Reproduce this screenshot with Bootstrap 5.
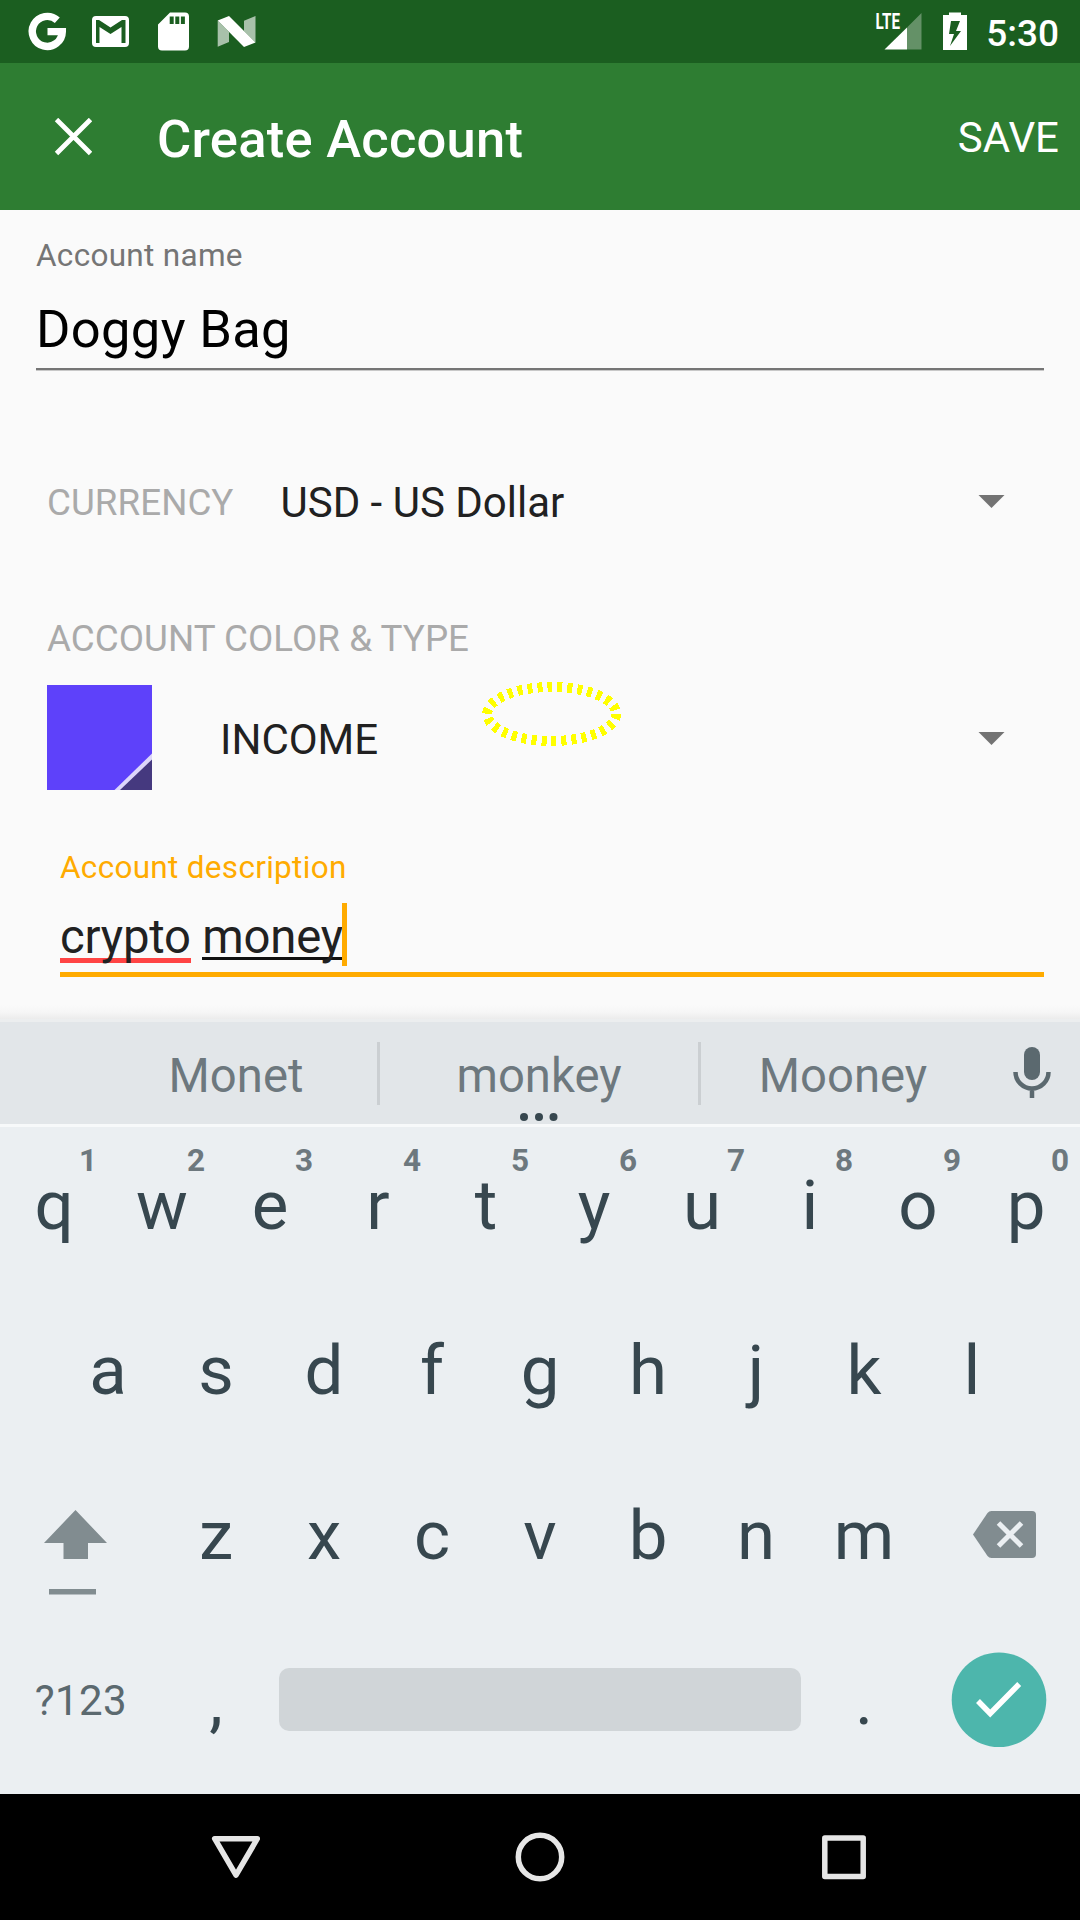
<!DOCTYPE html>
<html lang="en">
<head>
<meta charset="utf-8">
<meta name="viewport" content="width=device-width, initial-scale=1">
<title>Create Account</title>
<link href="https://cdn.jsdelivr.net/npm/bootstrap@5.3.0/dist/css/bootstrap.min.css" rel="stylesheet">
<style>
body{font-family:Roboto,"Noto Sans",sans-serif;background:#fafafa;color:#212121;overflow:hidden}
.phone{width:1080px;height:1920px;background:#fafafa}
svg{display:block;flex:none}
.statusbar{height:63px;background:#1b5e20}
.clock{font-size:37px;font-weight:500;line-height:44px;margin:0 21px 0 16px;padding-top:4px}
.toolbar{height:147px;background:#2e7d32;padding:0 21px 0 54px}
.toolbar h1{font-size:52.5px;font-weight:500;line-height:64px;margin:5px 0 0 65px;letter-spacing:.25px}
.save-btn{font-size:42px;line-height:50px;color:#fff;border:0;border-radius:0;margin-top:3px}
.form-area{height:809px;padding:26px 36px 0}
.float-label{font-size:31.5px;line-height:40px;color:#757575;letter-spacing:.3px}
.name-value{font-size:52.5px;line-height:64px;margin-top:21px;padding-bottom:7px;border-bottom:2px solid #757575;box-shadow:0 1px #c8c8c8;color:#000;letter-spacing:.32px}
.section-label{font-size:36.75px;color:#aaa;line-height:44px;letter-spacing:.04px}
.type-heading{margin:84px 0 0 11px}
.pick-value{font-size:42px;line-height:50px}
.drop{margin-left:auto}
.currency-row{height:61px;margin-top:102px;padding:0 39px 0 11px}
.currency-row .pick-value{margin-left:47px}
.currency-row .drop{margin-bottom:3px}
.type-row{height:105px;margin-top:24px;padding:0 39px 0 11px}
.type-row .pick-value{margin-left:68px;padding-top:4px}
.type-row .drop{margin-top:1px}
.desc-block{margin:58px 0 0 24px}
.desc-block .float-label{color:#ffab00}
.desc-value{font-size:47.25px;line-height:60px;height:70px;margin-top:19px;border-bottom:5px solid #ffab00;letter-spacing:-.2px}
.spell-bad,.spell-active{display:inline-block;height:60px}
.spell-bad{background:linear-gradient(#f44,#f44) 0 51px/100% 5px no-repeat}
.spell-active{background:linear-gradient(#111,#111) 0 50px/100% 3px no-repeat}
.caret-bar{width:5px;height:63px;background:#ffab00;margin:-4px 0 0 -1px}
.marker{left:480px;top:680px}
.kb-shadow{height:19px;margin-top:-19px;background:linear-gradient(#fafafa 25%,#f6f6f6 65%,#ececec)}
.suggest{height:108px;background:#e2e6e9;border-top:3px solid #eceeef;border-bottom:3px solid #f7f9fa;color:#6d787e;font-size:47.25px;padding-left:95px}
.suggest .word{line-height:102px;padding-top:3px}
.suggest .sep{width:3px;height:63px;background:#cbcfd2;margin-top:20px}
.more-dots{left:519px;top:1112px}
.mic{width:95px;padding:24px 0 0 28px}
.keys{height:667px;background:#ebeff2;color:#37474f}
.keyrow{height:165px}
.keycap{width:108px;font-size:69px;line-height:158px}
.hint{right:10px;top:16px;width:20px;font-size:31.5px;font-weight:700;line-height:36px;color:#6d787e}
.symbols{width:162px;font-size:42px;line-height:158px;letter-spacing:.4px;color:#5b696f}
.space{width:522px;height:63px;margin:46px 9px 0 9px;border-radius:10px;background:#d0d5d8}
.navbar-android{height:126px;background:#000}
</style>
</head>
<body>
<main class="phone d-flex flex-column position-relative overflow-hidden">
  <header class="text-white">
    <div class="statusbar d-flex align-items-center">
      <svg width="270" height="63" fill="#fff">
        <path d="M57.300 20.200A15 15 0 1 0 62.300 31.600H47.500" fill="none" stroke="#fff" stroke-width="7.400"/>
        <path fill-rule="evenodd" d="M96 16h29a4 4 0 0 1 4 4v23a4 4 0 0 1-4 4H96a4 4 0 0 1-4-4V20a4 4 0 0 1 4-4zM96 20v23h3.500V27l11 7 11-7v16h4V20h-3.500l-11.500 7.500L99 20z"/>
        <path fill-rule="evenodd" d="M170 12.500h15a4 4 0 0 1 4 4v30a4 4 0 0 1-4 4h-23a4 4 0 0 1-4-4V24.500zM169.700 16.500v7.500h4v-7.500zM175.300 16.500v7.500h4v-7.500zM180.900 16.500v7.500h4v-7.500z"/>
        <path d="M217.700 20.500L229 32v10l-11.300 4.700zM244 20.700l11.500-4.700v26.500L244 31z" opacity=".62"/>
        <path d="M217.700 20.500l11.300-4.500 26.500 26.500-11.500 4.500z"/>
      </svg>
      <svg class="ms-auto" width="100" height="63" viewBox="870 0 100 63" fill="#fff">
        <text x="875.500" y="29" font-size="22" font-weight="700" font-family="Roboto" textLength="24.500" lengthAdjust="spacingAndGlyphs">LTE</text>
        <path d="M907 27.500L921.500 13v36.500H907z" opacity=".32"/><path d="M884.500 49.500L907 27.500v22z"/>
        <path fill-rule="evenodd" d="M949 12.500h12V15h6v35h-24V15h6zM951 21l-2 13h5l-4 12 11-15h-5l4-10z"/>
      </svg>
      <span class="clock">5:30</span>
    </div>
    <div class="toolbar d-flex align-items-center">
      <svg width="38" height="38" stroke="#fff" stroke-width="4.800"><path d="M2.500 1.500l34 34M36.500 1.500l-34 34"/></svg>
      <h1>Create Account</h1>
      <button class="btn save-btn ms-auto p-0">SAVE</button>
    </div>
  </header>

  <section class="form-area">
    <div class="float-label">Account name</div>
    <div class="name-value">Doggy Bag</div>
    <div class="currency-row d-flex align-items-center">
      <span class="section-label">CURRENCY</span>
      <span class="pick-value">USD - US Dollar</span>
      <svg class="drop" width="27" height="13" fill="#737373"><path d="M.5 0h26L13.500 13z"/></svg>
    </div>
    <div class="section-label type-heading">ACCOUNT COLOR &amp; TYPE</div>
    <div class="type-row d-flex align-items-center">
      <svg width="105" height="105"><path fill="#5e41fa" d="M0 0h105v105H0z"/><path fill="#dcd6fa" d="M105 68.500V105H67.500z"/><path fill="#45397f" d="M105 74.500V105H73z"/></svg>
      <span class="pick-value">INCOME</span>
      <svg class="drop" width="27" height="13" fill="#737373"><path d="M.5 0h26L13.500 13z"/></svg>
    </div>
    <div class="desc-block">
      <div class="float-label">Account description</div>
      <div class="desc-value d-flex"><span class="spell-bad">crypto</span><span>&nbsp;</span><span class="spell-active">money</span><span class="caret-bar"></span></div>
    </div>
  </section>
  <svg class="marker position-absolute" width="144" height="68" shape-rendering="crispEdges"><ellipse cx="71.700" cy="34" rx="64.500" ry="27" fill="none" stroke="#ff0" stroke-width="10" stroke-dasharray="5 5"/></svg>

  <div class="kb-shadow"></div>
  <section class="suggest d-flex">
    <div class="word flex-fill text-center" style="width:282px">Monet</div><div class="sep"></div>
    <div class="word flex-fill text-center" style="width:318px">monkey</div><div class="sep"></div>
    <div class="word flex-fill text-center" style="width:284px">Mooney</div>
    <div class="mic flex-shrink-0"><svg width="40" height="54" fill="#5b696f"><rect x="11" y="1" width="16" height="33" rx="8"/><path d="M2.500 26a16.500 16.500 0 0 0 33 0M19 42v10" fill="none" stroke="#5b696f" stroke-width="4.500"/></svg></div>
  </section>
  <svg class="more-dots position-absolute" width="42" height="10" fill="#37474f"><circle cx="5" cy="5" r="4"/><circle cx="20" cy="5" r="4"/><circle cx="34.500" cy="5" r="4"/></svg>

  <section class="keys text-center">
    <div class="keyrow d-flex">
      <div class="keycap position-relative">q<span class="hint position-absolute">1</span></div>
      <div class="keycap position-relative">w<span class="hint position-absolute">2</span></div>
      <div class="keycap position-relative">e<span class="hint position-absolute">3</span></div>
      <div class="keycap position-relative">r<span class="hint position-absolute">4</span></div>
      <div class="keycap position-relative">t<span class="hint position-absolute">5</span></div>
      <div class="keycap position-relative">y<span class="hint position-absolute">6</span></div>
      <div class="keycap position-relative">u<span class="hint position-absolute">7</span></div>
      <div class="keycap position-relative">i<span class="hint position-absolute">8</span></div>
      <div class="keycap position-relative">o<span class="hint position-absolute">9</span></div>
      <div class="keycap position-relative">p<span class="hint position-absolute">0</span></div>
    </div>
    <div class="keyrow d-flex justify-content-center">
      <div class="keycap">a</div><div class="keycap">s</div><div class="keycap">d</div><div class="keycap">f</div><div class="keycap">g</div><div class="keycap">h</div><div class="keycap">j</div><div class="keycap">k</div><div class="keycap">l</div>
    </div>
    <div class="keyrow d-flex">
      <svg width="162" height="165" viewBox="0 1457 162 165" fill="#818c90"><path d="M75.500 1510l31.500 33H88v16H63.500v-16H44z"/><path d="M49 1589h47v5.500H49z"/></svg>
      <div class="keycap">z</div><div class="keycap">x</div><div class="keycap">c</div><div class="keycap">v</div><div class="keycap">b</div><div class="keycap">n</div><div class="keycap">m</div>
      <svg width="162" height="165" viewBox="918 1457 162 165"><path fill="#818c90" d="M973 1534.500l14.500-21.500q1.500-2 4-2H1032q4 0 4 4v39q0 4-4 4h-40.500q-2.500 0-4-2z"/><path d="M998.500 1523l23 23M1021.500 1523l-23 23" stroke="#ebeff2" stroke-width="5"/></svg>
    </div>
    <div class="keyrow d-flex">
      <div class="symbols">?123</div>
      <div class="keycap">,</div>
      <div class="space"></div>
      <div class="keycap">.</div>
      <svg width="162" height="165" viewBox="918 1622 162 165"><circle cx="999" cy="1699.800" r="47.300" fill="#4db6ac"/><path d="M978 1701l12.200 12.500 29-29.500" fill="none" stroke="#fff" stroke-width="5.500"/></svg>
    </div>
  </section>

  <nav class="navbar-android">
    <svg width="1080" height="126" viewBox="0 1794 1080 126" fill="none" stroke="#e6e6e6" stroke-width="5.500" stroke-linejoin="round"><path d="M214.700 1838.700h42.600L236 1875.200z"/><circle cx="540" cy="1857" r="21.700"/><rect x="824.800" y="1838" width="38.400" height="38.400"/></svg>
  </nav>
</main>
<script src="https://cdn.jsdelivr.net/npm/bootstrap@5.3.0/dist/js/bootstrap.bundle.min.js"></script>
</body>
</html>
